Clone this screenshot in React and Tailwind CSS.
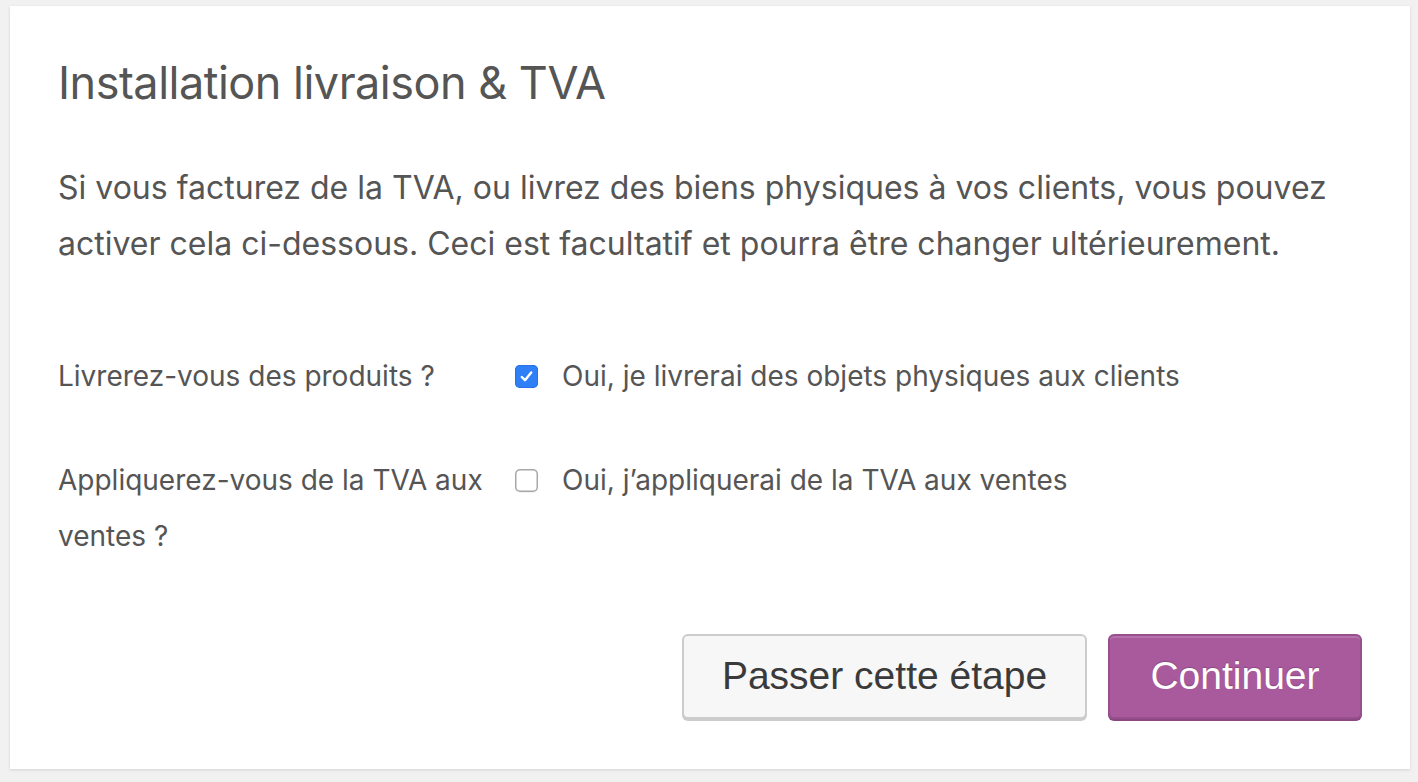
import { useState } from 'react';

function Checkbox({ checked, onChange }) {
  return (
    <button
      type="button"
      onClick={onChange}
      className={
        'flex h-[23px] w-[23px] shrink-0 items-center justify-center rounded-[5px] ' +
        (checked
          ? 'bg-[#2f7ff7] shadow-[inset_0_0_0_1px_#2a72e0]'
          : 'bg-white shadow-[inset_0_0_0_1.5px_#a8a8a8,0_1px_1px_rgba(0,0,0,0.06)]')
      }
    >
      {checked && (
        <svg width="15" height="15" viewBox="0 0 15 15" fill="none">
          <path d="M2.8 8 L6 11.2 L12.2 3.5" stroke="white" strokeWidth="2.4" strokeLinecap="round" strokeLinejoin="round" />
        </svg>
      )}
    </button>
  );
}

export default function App() {
  const [ship, setShip] = useState(true);
  const [tax, setTax] = useState(false);

  return (
    <div className="min-h-[782px] bg-[#f1f1f1] pt-[6px] pl-[10px] font-['Inter',sans-serif] text-[#555]">
      <div className="flex h-[763px] w-[1400px] flex-col bg-white px-[48px] pt-[49px] pb-[50px] shadow-[0_1px_3px_rgba(0,0,0,0.13)]">
        <h1 className="text-[45px] leading-[56px] font-normal tracking-[-0.5px]">Installation livraison &amp; TVA</h1>

        <p className="mt-[49px] text-[32px] leading-[56px]">
          Si vous facturez de la TVA, ou livrez des biens physiques à vos clients, vous pouvez activer cela ci-dessous. Ceci est facultatif et pourra être changer ultérieurement.
        </p>

        <div className="mt-[76px] flex flex-col gap-[48px] text-[28px] leading-[56px]">
          <div className="flex">
            <div className="w-[440px] shrink-0">Livrerez-vous des produits ?</div>
            <div className="ml-[17px] flex h-[56px] items-center gap-[24px] self-start">
              <Checkbox checked={ship} onChange={() => setShip(!ship)} />
              <span>Oui, je livrerai des objets physiques aux clients</span>
            </div>
          </div>
          <div className="flex">
            <div className="w-[440px] shrink-0">Appliquerez-vous de la TVA aux ventes ?</div>
            <div className="ml-[17px] flex h-[56px] items-center gap-[24px] self-start">
              <Checkbox checked={tax} onChange={() => setTax(!tax)} />
              <span>Oui, j’appliquerai de la TVA aux ventes</span>
            </div>
          </div>
        </div>

        <div className="mt-auto flex justify-end gap-[21px] font-['Liberation_Sans',sans-serif]">
          <button className="h-[85px] w-[405px] rounded-[6px] border-2 border-[#cccccc] bg-[#f7f7f7] text-[39px] text-[#3a3a3a] shadow-[0_2px_0_#cccccc]">
            Passer cette étape
          </button>
          <button className="h-[85px] w-[254px] rounded-[6px] border-2 border-[#984f8d] bg-[#a95a9d] text-[39px] text-white shadow-[0_2px_0_#8a4780,inset_0_2px_0_rgba(255,255,255,0.15)] [text-shadow:0_-1px_1px_rgba(0,0,0,0.2)]">
            Continuer
          </button>
        </div>
      </div>
    </div>
  );
}
